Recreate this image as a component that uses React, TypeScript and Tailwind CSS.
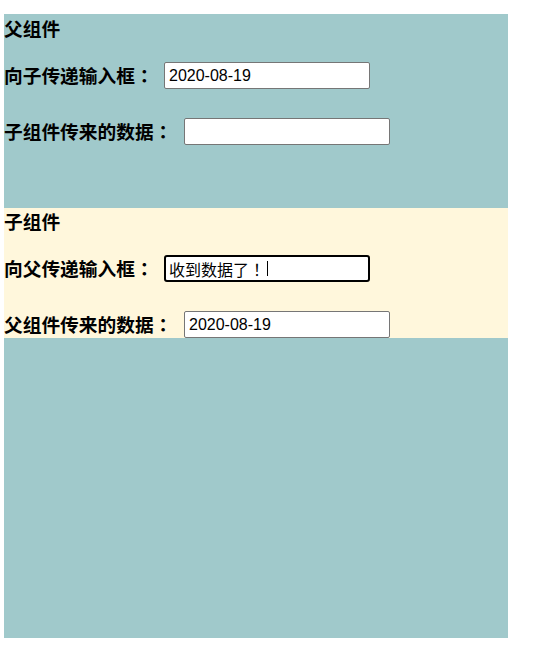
import React from "react";

const labelCls =
  "shrink-0 text-[18.72px] font-bold text-black leading-none [font-family:'Noto_Sans_CJK_SC','Noto_Sans',sans-serif]";
const inputCls =
  "w-[206px] h-[27px] shrink-0 border border-[#767676] rounded-[2px] bg-white pl-[4px] text-[16px] font-normal text-black outline-none [font-family:'Liberation_Sans','Noto_Sans_CJK_SC',sans-serif]";
const punct = "[font-family:'Noto_Sans_CJK_TC',sans-serif]";

export default function App() {
  return (
    <div className="w-[538px] h-[663px] bg-white">
      <div className="ml-[4px] pt-[14px]">
        <div className="w-[504px] h-[624px] bg-[#a0c9cb] flex flex-col">
          {/* Parent */}
          <div className="h-[194px] flex flex-col">
            <div className="h-[29px] flex items-center">
              <span className={labelCls}>父组件</span>
            </div>
            <div className="mt-[19px] h-[27px] flex items-center">
              <span className={labelCls + " w-[160px]"}>
                向子传递输入框<span className={punct}>：</span>
              </span>
              <input className={inputCls} readOnly defaultValue="2020-08-19" />
            </div>
            <div className="mt-[29px] h-[27px] flex items-center">
              <span className={labelCls + " w-[180px]"}>
                子组件传来的数据<span className={punct}>：</span>
              </span>
              <input className={inputCls} readOnly defaultValue="" />
            </div>
          </div>
          {/* Child */}
          <div className="h-[130px] bg-[#fff7dc] flex flex-col">
            <div className="h-[27px] flex items-center">
              <span className={labelCls}>子组件</span>
            </div>
            <div className="mt-[20px] h-[27px] flex items-center">
              <span className={labelCls + " w-[160px]"}>
                向父传递输入框<span className={punct}>：</span>
              </span>
              <div className="w-[206px] h-[27px] shrink-0 border-2 border-black rounded-[3px] bg-white pl-[3px] flex items-center text-[16px] font-normal text-black [font-family:'Noto_Sans_CJK_SC','Liberation_Sans',sans-serif]">
                <span className="leading-none">
                  收到数据了<span className={punct}>！</span>
                </span>
                <span className="ml-[2px] w-px h-[15px] bg-black" />
              </div>
            </div>
            <div className="mt-[29px] h-[27px] flex items-center">
              <span className={labelCls + " w-[180px]"}>
                父组件传来的数据<span className={punct}>：</span>
              </span>
              <input className={inputCls} readOnly defaultValue="2020-08-19" />
            </div>
          </div>
        </div>
      </div>
    </div>
  );
}
